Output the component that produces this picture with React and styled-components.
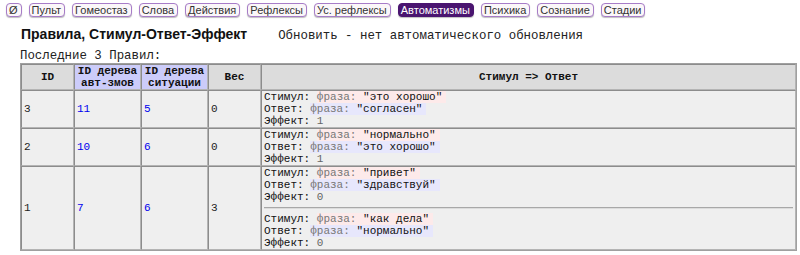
import React from "react";
import styled, { createGlobalStyle } from "styled-components";

const GlobalStyle = createGlobalStyle`
  body {
    margin: 0;
    background: #fff;
    font-family: "Liberation Sans", Arial, sans-serif;
  }
`;

const Nav = styled.div`
  display: flex;
  gap: 7px;
  padding: 3px 6px 0;
`;

const NavButton = styled.span`
  display: inline-block;
  height: 12px;
  line-height: 12px;
  padding: 0 3px 0 2px;
  font-size: 11px;
  border: 1px solid ${(p) => (p.$active ? "#4a1570" : "#a77cc8")};
  border-radius: 4px;
  background: ${(p) => (p.$active ? "#4a1570" : "#fbf7f9")};
  color: ${(p) => (p.$active ? "#fff" : "#333")};
  box-shadow: 0 1px 1px rgba(0, 0, 0, 0.25);
  white-space: nowrap;
`;

const Content = styled.div`
  padding: 0 0 0 20px;
`;

const TitleRow = styled.div`
  display: flex;
  align-items: baseline;
  gap: 31px;
  margin-top: 8px;
  padding-left: 1px;
`;

const Title = styled.span`
  font-size: 14px;
  line-height: 18px;
  font-weight: bold;
  color: #111;
`;

const Refresh = styled.span`
  font-family: "Liberation Mono", "Courier New", monospace;
  font-size: 12.4px;
  color: #222;
`;

const Caption = styled.div`
  font-family: "Liberation Mono", "Courier New", monospace;
  font-size: 12.4px;
  line-height: 13px;
  margin-top: 7px;
  color: #222;
`;

const Table = styled.table`
  width: 777px;
  border-collapse: separate;
  border-spacing: 0;
  table-layout: fixed;
  border: 1px solid #a0a0a0;
  font-family: "Liberation Mono", "Courier New", monospace;
  font-size: 11px;
  line-height: 12px;
`;

const Th = styled.th`
  box-sizing: border-box;
  width: ${(p) => (p.$w ? `${p.$w}px` : "auto")};
  padding: 0 2px;
  background: ${(p) => (p.$tree ? "#ccccfa" : "#dcdcdc")};
  border: 1px solid;
  border-color: #8c8c8c #b4b4b4 #b4b4b4 #8c8c8c;
  font-weight: bold;
  color: #111;
  text-align: center;
  vertical-align: middle;
`;

const Td = styled.td`
  box-sizing: border-box;
  padding: 0 2px;
  background: #efefef;
  border: 1px solid;
  border-color: #8c8c8c #b4b4b4 #b4b4b4 #8c8c8c;
  color: ${(p) => (p.$link ? "#0000ee" : "#222")};
  vertical-align: middle;
  white-space: nowrap;
`;

const Line = styled.div`
  height: 12px;
  color: #111;
`;

const Phrase = styled.span`
  display: inline-block;
  padding-right: 4px;
  background: ${(p) => (p.$answer ? "#e7e7fc" : "#fdeaea")};
`;

const Kind = styled.span`
  color: #777;
`;

const Value = styled.span`
  color: #666;
`;

const Divider = styled.hr`
  margin: 4px 0;
  border: 0;
  border-top: 1px solid #a8a8a8;
  border-bottom: 1px solid #dcdcdc;
`;

const navItems = [
  "Ø",
  "Пульт",
  "Гомеостаз",
  "Слова",
  "Действия",
  "Рефлексы",
  "Ус. рефлексы",
  "Автоматизмы",
  "Психика",
  "Сознание",
  "Стадии",
];

const rules = [
  {
    id: 3,
    tree: 11,
    situation: 5,
    weight: 0,
    pairs: [{ stimulus: "это хорошо", answer: "согласен", effect: 1 }],
  },
  {
    id: 2,
    tree: 10,
    situation: 6,
    weight: 0,
    pairs: [{ stimulus: "нормально", answer: "это хорошо", effect: 1 }],
  },
  {
    id: 1,
    tree: 7,
    situation: 6,
    weight: 3,
    pairs: [
      { stimulus: "привет", answer: "здравствуй", effect: 0 },
      { stimulus: "как дела", answer: "нормально", effect: 0 },
    ],
  },
];

function Pair({ pair }) {
  return (
    <>
      <Line>
        Стимул:{" "}
        <Phrase>
          <Kind>фраза:</Kind> "{pair.stimulus}"
        </Phrase>
      </Line>
      <Line>
        Ответ:{" "}
        <Phrase $answer>
          <Kind>фраза:</Kind> "{pair.answer}"
        </Phrase>
      </Line>
      <Line>
        Эффект: <Value>{pair.effect}</Value>
      </Line>
    </>
  );
}

export default function App() {
  return (
    <>
      <GlobalStyle />
      <Nav>
        {navItems.map((item) => (
          <NavButton key={item} $active={item === "Автоматизмы"}>
            {item}
          </NavButton>
        ))}
      </Nav>
      <Content>
        <TitleRow>
          <Title>Правила, Стимул-Ответ-Эффект</Title>
          <Refresh>Обновить - нет автоматического обновления</Refresh>
        </TitleRow>
        <Caption>Последние 3 Правил:</Caption>
        <Table>
          <thead>
            <tr>
              <Th $w={53}>ID</Th>
              <Th $w={67} $tree>
                ID дерева
                <br />
                авт-змов
              </Th>
              <Th $w={67} $tree>
                ID дерева
                <br />
                ситуации
              </Th>
              <Th $w={53}>Вес</Th>
              <Th>Стимул =&gt; Ответ</Th>
            </tr>
          </thead>
          <tbody>
            {rules.map((rule) => (
              <tr key={rule.id}>
                <Td>{rule.id}</Td>
                <Td $link>{rule.tree}</Td>
                <Td $link>{rule.situation}</Td>
                <Td>{rule.weight}</Td>
                <Td>
                  {rule.pairs.map((pair, i) => (
                    <React.Fragment key={i}>
                      {i > 0 && <Divider />}
                      <Pair pair={pair} />
                    </React.Fragment>
                  ))}
                </Td>
              </tr>
            ))}
          </tbody>
        </Table>
      </Content>
    </>
  );
}
